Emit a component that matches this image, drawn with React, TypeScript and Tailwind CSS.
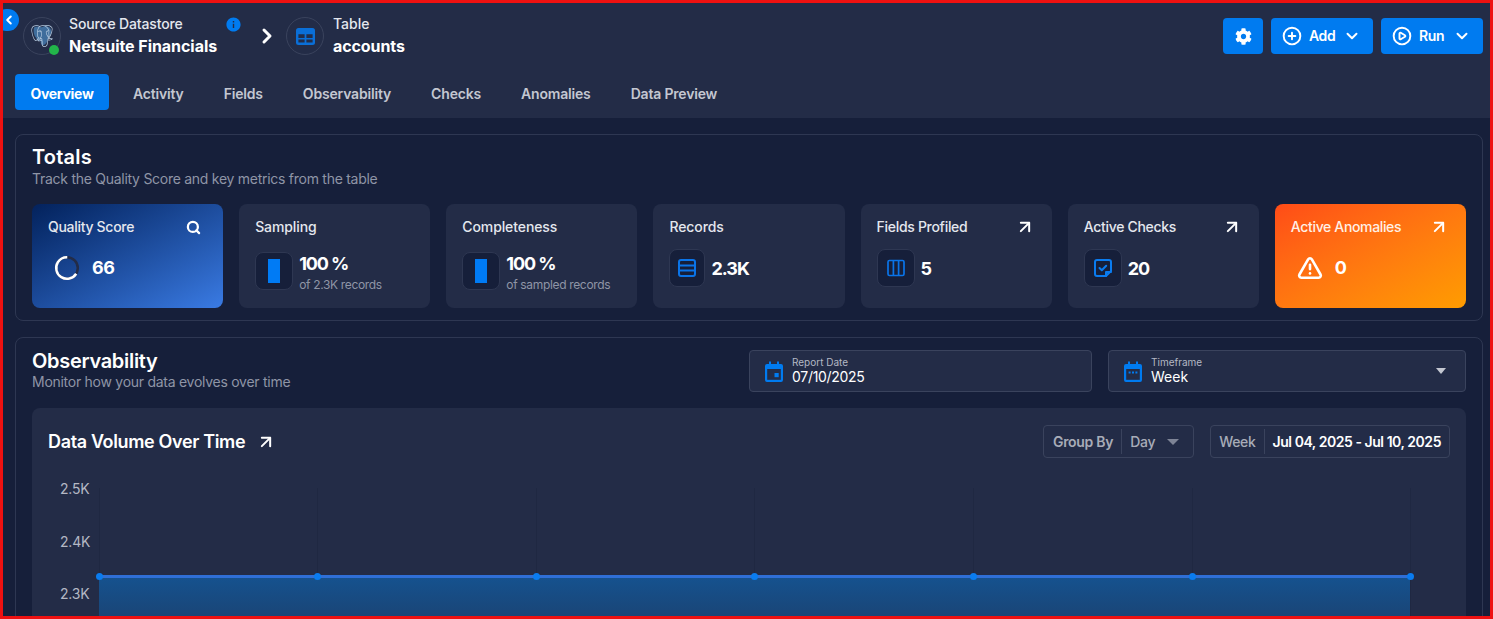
import React from "react";
import { ArrowUpRight, ChevronDown, ChevronLeft, ChevronRight, CirclePlay, CirclePlus, Search, TriangleAlert } from "lucide-react";
import { FaCog } from "react-icons/fa";
import { MdInfo } from "react-icons/md";
import { SiPostgresql } from "react-icons/si";

const tabs = ["Activity", "Fields", "Observability", "Checks", "Anomalies", "Data Preview"];
const xs = [0, 218, 437, 655, 874, 1093, 1311];

function IconBox({ children, narrow }: { children: React.ReactNode; narrow?: boolean }) {
  return (
    <div className={`flex h-[38px] shrink-0 items-center justify-center rounded-lg border border-[#2e3752] bg-[#161f3a] ${narrow ? "w-[36px]" : "w-[38px]"}`}>
      {children}
    </div>
  );
}

function LinkArrow() {
  return <ArrowUpRight size={20} strokeWidth={2.4} className="mr-[1px] shrink-0 text-white" />;
}

function Card({ title, link, children }: { title: string; link?: boolean; children: React.ReactNode }) {
  return (
    <div className="h-[104px] rounded-lg bg-[#232c47] px-4 pt-[14px]">
      <div className="flex h-[18px] items-center justify-between">
        <span className={`text-sm font-medium text-[#e4e7ee] ${link ? "tracking-[-0.3px]" : "tracking-[-0.1px]"}`}>{title}</span>
        {link && <LinkArrow />}
      </div>
      {children}
    </div>
  );
}

function Percent({ sub }: { sub: string }) {
  return (
    <div className="mt-[14px] flex items-start gap-[6px]">
      <div className="mt-[2px]">
        <IconBox>
          <div className="h-6 w-3 bg-[#007bf5]" />
        </IconBox>
      </div>
      <div className="mt-[2px]">
        <div className="text-lg leading-[24px] font-bold tracking-[-1.1px] text-white">100 %</div>
        <div className="text-xs leading-[18px] tracking-[-0.33px] text-[#8f95a6]">{sub}</div>
      </div>
    </div>
  );
}

function Metric({ icon, value, narrow }: { icon: React.ReactNode; value: string; narrow?: boolean }) {
  return (
    <div className="mt-[13px] flex items-center gap-[6px]">
      <IconBox narrow={narrow}>{icon}</IconBox>
      <span className="mt-[2px] text-lg leading-[24px] font-bold tracking-[-1px] text-white">{value}</span>
    </div>
  );
}

function HeaderButton({ icon, label }: { icon: React.ReactNode; label: string }) {
  return (
    <button className="flex h-9 w-[102px] items-center rounded bg-[#007bf0] pl-[11px] text-sm font-semibold tracking-[-0.4px] text-white">
      {icon}
      <span className="ml-[7px] w-[34px] text-left">{label}</span>
      <ChevronDown size={18} strokeWidth={2.6} />
    </button>
  );
}

function CalendarIcon({ kind }: { kind: "event" | "range" }) {
  return (
    <svg width="18" height="21" viewBox="0 0 18 21" className="shrink-0" fill="none">
      <path d="M4 0.5h2v2.5h6V0.5h2V3h2a2 2 0 0 1 2 2v14a2 2 0 0 1-2 2H2a2 2 0 0 1-2-2V5a2 2 0 0 1 2-2h2z" fill="#007bf0" />
      <rect x="2.2" y="8" width="13.6" height="10.8" fill="#232c47" />
      {kind === "event" ? (
        <rect x="9.5" y="12" width="4.2" height="4.2" fill="#007bf0" />
      ) : (
        <path d="M4.6 10.6h2v2h-2zM8 10.6h2v2H8zM11.4 10.6h2v2h-2z" fill="#007bf0" />
      )}
    </svg>
  );
}

export default function App() {
  return (
    <div className="relative h-[619px] w-[1493px] overflow-hidden border-[3px] border-[#ee1111] bg-[#161f3a] [font-family:Inter,sans-serif]">
      <div className="absolute top-[6px] left-[-8px] flex h-[22px] w-[24px] items-center justify-end rounded-full bg-[#007bf0] pr-[3px]">
        <ChevronLeft size={14} strokeWidth={3.5} className="text-white" />
      </div>

      <div className="h-[115px] bg-[#232c47] pt-[14px] pr-[7px] pl-3">
        <div className="flex h-[38px] items-center pl-2">
          <div className="relative flex h-[38px] w-[38px] items-center justify-center rounded-full border border-[#3a435d]">
            <div className="relative h-[22px] w-[22px]">
              <svg width="22" height="22" viewBox="0 0 24 24" className="absolute inset-0">
                <path d="M3 4C3 2 6 1 9 2L12 2.5C14 1 19 1 21 3.5C23 6 22 10 20 13L18.5 15C18 18 16 22 13 22C11 22 10.5 20 10.5 17C8 18 6 16 5.5 14C3.5 12 2.5 7 3 4Z" fill="#3f6d9c" />
              </svg>
              <SiPostgresql size={22} className="absolute inset-0 text-[#b9cde2]" />
            </div>
            <div className="absolute right-[1px] bottom-[-1px] h-[10px] w-[10px] rounded-full bg-[#22b54a]" />
          </div>
          <div className="ml-2 w-[148px]">
            <div className="text-sm leading-[17px] font-medium tracking-[-0.15px] text-[#e4e7ee]">Source Datastore</div>
            <div className="mt-[2px] text-base leading-[24px] font-bold tracking-[-0.05px] whitespace-nowrap text-white">Netsuite Financials</div>
          </div>
          <MdInfo size={17} className="mt-[-24px] ml-[8px] text-[#007bf0]" />
          <ChevronRight size={24} strokeWidth={3} className="ml-[13px] text-white" />
          <div className="ml-[7px] flex h-[38px] w-[38px] items-center justify-center rounded-full border border-[#3a435d]">
            <svg width="19" height="17" viewBox="0 0 19 17" fill="none">
              <rect width="19" height="17" rx="2.5" fill="#0a6fd8" />
              <path d="M2.4 6.3h6.2v3.6H2.4zM10.4 6.3h6.2v3.6h-6.2zM2.4 11.4h6.2v3.2H2.4zM10.4 11.4h6.2v3.2h-6.2z" fill="#232c47" />
            </svg>
          </div>
          <div className="ml-[9px]">
            <div className="text-sm leading-[17px] font-medium text-[#e4e7ee]">Table</div>
            <div className="mt-[2px] text-base leading-[24px] font-bold tracking-[-0.1px] text-white">accounts</div>
          </div>
          <div className="ml-auto flex gap-2">
            <button className="flex h-9 w-10 items-center justify-center rounded bg-[#007bf0] text-white">
              <FaCog size={17} />
            </button>
            <HeaderButton icon={<CirclePlus size={20} strokeWidth={2.3} />} label="Add" />
            <HeaderButton icon={<CirclePlay size={20} strokeWidth={2.3} />} label="Run" />
          </div>
        </div>
        <div className="mt-[19px] flex items-center">
          <div className="flex h-9 w-[94px] items-center justify-center rounded bg-[#007bf0] pt-[3px] text-sm font-bold tracking-[-0.3px] text-white">Overview</div>
          <div className="ml-6 flex gap-[40px] pt-[4px]">
            {tabs.map((t) => (
              <span key={t} className="text-sm font-semibold tracking-[-0.18px] text-[#c3c7d1]">{t}</span>
            ))}
          </div>
        </div>
      </div>

      <div className="pt-4 pr-[7px] pl-3">
        <section className="h-[187px] rounded-lg border border-[#2e3752] px-4 pt-[9px]">
          <h2 className="text-xl leading-[26px] font-semibold tracking-[0.2px] text-white">Totals</h2>
          <p className="text-sm leading-[17px] tracking-[-0.27px] text-[#8f95a6]">Track the Quality Score and key metrics from the table</p>
          <div className="mt-[17px] grid grid-cols-7 gap-4">
            <div className="h-[104px] rounded-lg bg-gradient-to-br from-[#04225c] to-[#3a7be4] px-4 pt-[14px]">
              <div className="flex h-[18px] items-center justify-between">
                <span className="text-sm font-medium tracking-[-0.3px] text-[#e4e7ee]">Quality Score</span>
                <Search size={15} strokeWidth={3.6} className="mr-[6px] text-white" />
              </div>
              <div className="mt-[19px] flex items-center pl-[6px]">
                <svg width="26" height="26" viewBox="0 0 26 26" fill="none">
                  <circle cx="13" cy="13" r="10.8" stroke="#232c47" strokeWidth="2.5" />
                  <circle cx="13" cy="13" r="10.8" stroke="#ffffff" strokeWidth="2.5" strokeDasharray="44.8 67.9" transform="rotate(32 13 13)" />
                </svg>
                <span className="ml-[12px] text-lg leading-[24px] font-bold tracking-[-0.4px] text-white">66</span>
              </div>
            </div>
            <Card title="Sampling"><Percent sub="of 2.3K records" /></Card>
            <Card title="Completeness"><Percent sub="of sampled records" /></Card>
            <Card title="Records">
              <Metric narrow value="2.3K" icon={
                <svg width="18" height="20" viewBox="0 0 18 20" fill="none" stroke="#0a74e8" strokeWidth="2">
                  <rect x="1" y="2" width="16" height="16" rx="2" /><path d="M1 7.5h16M1 12.5h16" />
                </svg>} />
            </Card>
            <Card title="Fields Profiled" link>
              <Metric value="5" icon={
                <svg width="18" height="18" viewBox="0 0 18 18" fill="none" stroke="#0a74e8" strokeWidth="1.7">
                  <rect x="1" y="1.5" width="16" height="15" rx="1.5" /><path d="M6.4 1.5v15M11.6 1.5v15" />
                </svg>} />
            </Card>
            <Card title="Active Checks" link>
              <Metric value="20" icon={
                <svg width="20" height="20" viewBox="0 0 20 20" fill="none" stroke="#0a7cf0" strokeWidth="2" strokeLinejoin="round">
                  <path d="M4 2h12a2 2 0 0 1 2 2v9l-5 5H4a2 2 0 0 1-2-2V4a2 2 0 0 1 2-2z" />
                  <path d="M6.5 10l2.3 2.3 4.4-4.6M13 18v-4h5" strokeLinecap="round" />
                </svg>} />
            </Card>
            <div className="h-[104px] rounded-lg bg-gradient-to-br from-[#ff4b17] to-[#ff9c00] px-4 pt-[14px]">
              <div className="flex h-[18px] items-center justify-between">
                <span className="text-sm font-medium tracking-[-0.35px] whitespace-nowrap text-[#fff0e6]">Active Anomalies</span>
                <LinkArrow />
              </div>
              <div className="mt-[19px] flex items-center pl-[6px]">
                <TriangleAlert size={26} strokeWidth={2.4} className="text-white" />
                <span className="ml-[12px] text-lg leading-[24px] font-bold text-white">0</span>
              </div>
            </div>
          </div>
        </section>

        <section className="mt-4 h-[400px] rounded-lg border border-[#2e3752] px-4">
          <div className="flex h-[70px] pt-3">
            <div className="flex-1">
              <h2 className="mt-[-1px] text-xl leading-[24px] font-semibold tracking-[-0.3px] text-white">Observability</h2>
              <p className="text-sm leading-[18px] tracking-[-0.27px] text-[#8f95a6]">Monitor how your data evolves over time</p>
            </div>
            <div className="flex h-[42px] w-[343px] items-center rounded border border-[#3a435d] bg-[#232c47] pl-[15px]">
              <CalendarIcon kind="event" />
              <div className="mt-[-2px] ml-[9px]">
                <div className="text-[10px] leading-[12px] text-[#b4b8c4]">Report Date</div>
                <div className="text-sm leading-[17px] tracking-[-0.3px] text-white">07/10/2025</div>
              </div>
            </div>
            <div className="ml-4 flex h-[42px] w-[358px] items-center rounded border border-[#3a435d] bg-[#232c47] pl-[15px]">
              <CalendarIcon kind="range" />
              <div className="mt-[-2px] ml-[9px]">
                <div className="text-[10px] leading-[12px] text-[#b4b8c4]">Timeframe</div>
                <div className="text-sm leading-[17px] text-white">Week</div>
              </div>
              <div className="mr-[19px] ml-auto h-0 w-0 border-x-[5px] border-t-[6px] border-x-transparent border-t-[#c3c7d1]" />
            </div>
          </div>
          <div className="h-[300px] rounded-lg bg-[#232c47] px-4 pt-[17px]">
            <div className="flex h-[33px] items-center">
              <h3 className="text-lg font-semibold tracking-[-0.35px] text-white">Data Volume Over Time</h3>
              <ArrowUpRight size={20} strokeWidth={2.4} className="ml-[11px] text-white" />
              <div className="ml-auto flex h-[33px] items-center rounded border border-[#3a435d] pr-[14px] pl-[9px] text-sm font-medium tracking-[-0.3px] text-[#a8acb8]">
                <span className="pr-2 font-semibold">Group By</span>
                <span className="h-[25px] w-px bg-[#3a435d]" />
                <span className="ml-2">Day</span>
                <span className="ml-[12px] h-0 w-0 border-x-[6px] border-t-[6px] border-x-transparent border-t-[#7e8496]" />
              </div>
              <div className="ml-4 flex h-[33px] items-center rounded border border-[#3a435d] px-2 text-sm font-medium tracking-[-0.3px] text-[#a8acb8]">
                <span className="pr-2">Week</span>
                <span className="h-[25px] w-px bg-[#3a435d]" />
                <span className="ml-2 font-semibold tracking-[-0.45px] text-white">Jul 04, 2025 - Jul 10, 2025</span>
              </div>
            </div>
            <div className="mt-[30px] flex">
              <div className="mt-[-25px] w-[51px] pl-3 text-sm leading-[52.5px] tracking-[-0.2px] text-[#b4b8c4]">
                <div>2.5K</div>
                <div>2.4K</div>
                <div>2.3K</div>
              </div>
              <svg width="1325" height="140" viewBox="0 0 1325 140" fill="none" className="shrink-0 overflow-visible">
                <defs>
                  <linearGradient id="vol" x1="0" y1="0" x2="0" y2="1">
                    <stop offset="0" stopColor="#15528f" />
                    <stop offset="1" stopColor="#232c47" />
                  </linearGradient>
                </defs>
                {xs.map((x) => <path key={x} d={`M${x + 0.5} 0V140`} stroke="#1f2842" />)}
                <rect x="0" y="88" width="1311" height="120" fill="url(#vol)" />
                <path d="M0 88.5H1311" stroke="#2f6fd6" strokeWidth="3" />
                {xs.map((x) => <circle key={x} cx={x + 0.5} cy="88.5" r="3.5" fill="#0a7cf0" />)}
              </svg>
            </div>
          </div>
        </section>
      </div>
    </div>
  );
}
